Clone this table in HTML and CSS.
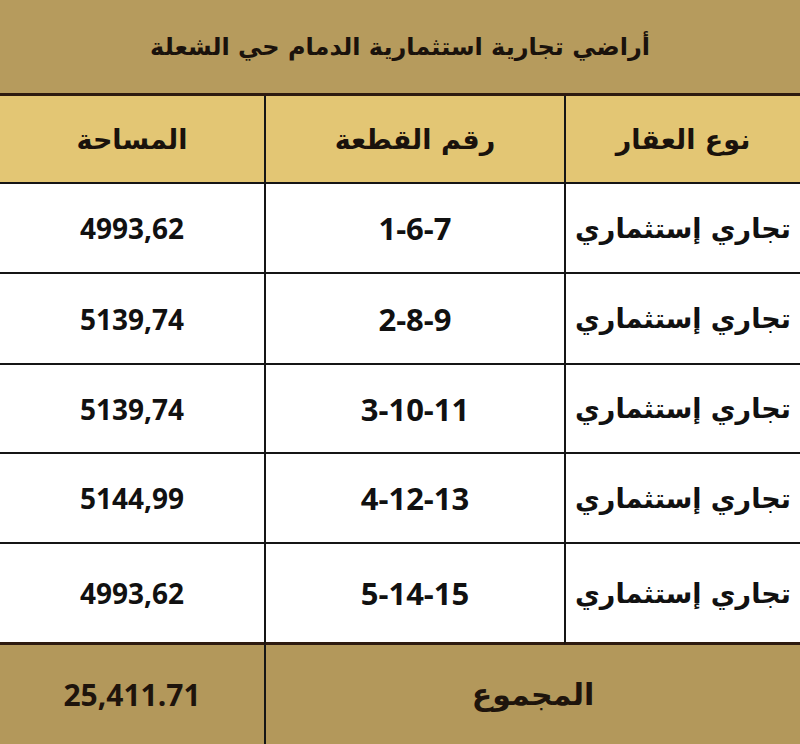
FILE: index.html
```html
<!DOCTYPE html>
<html lang="ar" dir="rtl">
<head>
<meta charset="utf-8">
<link rel="stylesheet" href="styles.css">
</head>
<body>
<div class="sheet">
  <div class="title">أراضي تجارية استثمارية الدمام حي الشعلة</div>
  <div class="grid">
    <div class="cell head">نوع العقار</div>
    <div class="cell head">رقم القطعة</div>
    <div class="cell head">المساحة</div>

    <div class="cell type">تجاري إستثماري</div>
    <div class="cell plot">1-6-7</div>
    <div class="cell area">4993,62</div>

    <div class="cell type">تجاري إستثماري</div>
    <div class="cell plot">2-8-9</div>
    <div class="cell area">5139,74</div>

    <div class="cell type">تجاري إستثماري</div>
    <div class="cell plot">3-10-11</div>
    <div class="cell area">5139,74</div>

    <div class="cell type">تجاري إستثماري</div>
    <div class="cell plot">4-12-13</div>
    <div class="cell area">5144,99</div>

    <div class="cell type last">تجاري إستثماري</div>
    <div class="cell plot last">5-14-15</div>
    <div class="cell area last">4993,62</div>

    <div class="cell foot total-label">المجموع</div>
    <div class="cell foot total">25,411.71</div>
  </div>
</div>
</body>
</html>
```

FILE: styles.css
```css
html, body {
  margin: 0;
  padding: 0;
  background: #ffffff;
}
.sheet {
  width: 800px;
  height: 744px;
  overflow: hidden;
  font-family: "DejaVu Sans", "Noto Sans", sans-serif;
  color: #111;
}
.title {
  height: 93px;
  background: #b69b5d;
  border-bottom: 3px solid #2d1a10;
  display: flex;
  align-items: center;
  justify-content: center;
  font-weight: bold;
  font-size: 24px;
  color: #1a120c;
}
.grid {
  display: grid;
  grid-template-columns: 236px 300px 264px;
  grid-template-rows: 88px 90px 91px 89px 90px 101px 99px;
}
.cell {
  display: flex;
  align-items: center;
  justify-content: center;
  border-bottom: 2px solid #151515;
  border-left: 2px solid #151515;
  box-sizing: border-box;
  font-weight: bold;
}
.area, .head:nth-child(3), .total {
  border-left: none;
}
.head {
  background: #e3c674;
  font-size: 27px;
  color: #1a120c;
}
.type {
  font-size: 27px;
}
.plot {
  font-family: "Open Sans", "Liberation Sans", Arial, sans-serif;
  font-size: 31px;
  direction: ltr;
}
.area {
  font-family: "Open Sans", "Liberation Sans", Arial, sans-serif;
  font-size: 28px;
  direction: ltr;
}
.last {
  border-bottom: 3px solid #2d1a10;
}
.foot {
  background: #b3985b;
  border-bottom: none;
  color: #1e140c;
}
.total-label {
  grid-column: span 2;
  font-size: 30px;
  border-left: 2px solid #151515;
}
.total {
  font-family: "Open Sans", "Liberation Sans", Arial, sans-serif;
  font-size: 30px;
  direction: ltr;
}
```
